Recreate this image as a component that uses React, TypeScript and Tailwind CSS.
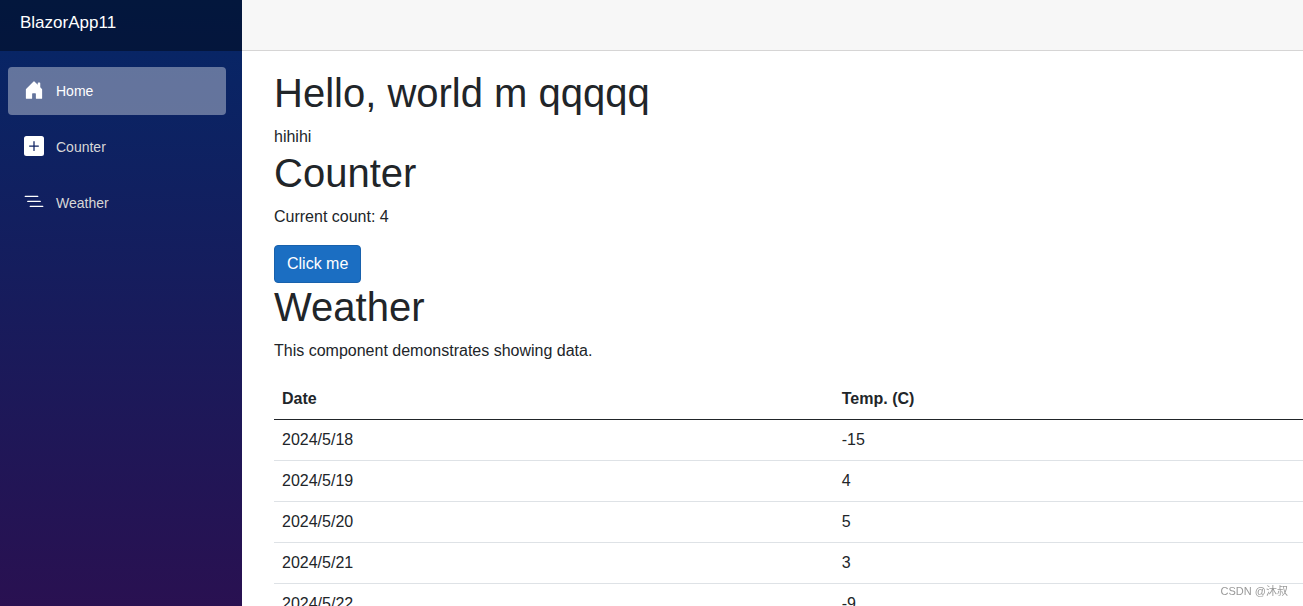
import { useState } from 'react';
import { BsListNested, BsPlusSquareFill } from 'react-icons/bs';

function HouseIcon({ className }: { className?: string }) {
  return (
    <svg viewBox="0 0 16 16" fill="currentColor" className={className} aria-hidden="true">
      <path d="M6.5 14.5v-3.505c0-.245.25-.495.5-.495h2c.25 0 .5.25.5.5v3.5a.5.5 0 0 0 .5.5h4a.5.5 0 0 0 .5-.5v-7a.5.5 0 0 0-.146-.354L13 5.793V2.5a.5.5 0 0 0-.5-.5h-1a.5.5 0 0 0-.5.5v1.293L8.354 1.146a.5.5 0 0 0-.708 0l-6 6A.5.5 0 0 0 1.5 7.5v7a.5.5 0 0 0 .5.5h4a.5.5 0 0 0 .5-.5Z" />
    </svg>
  );
}

const navItems = [
  { label: 'Home', href: '#home', icon: HouseIcon, active: true },
  { label: 'Counter', href: '#counter', icon: BsPlusSquareFill, active: false },
  { label: 'Weather', href: '#weather', icon: BsListNested, active: false },
];

const forecasts = [
  { date: '2024/5/18', temp: -15 },
  { date: '2024/5/19', temp: 4 },
  { date: '2024/5/20', temp: 5 },
  { date: '2024/5/21', temp: 3 },
  { date: '2024/5/22', temp: -9 },
];

function Sidebar() {
  return (
    <aside className="w-[242px] shrink-0 bg-[linear-gradient(180deg,rgb(5,39,103)_0px,#3a0647_890px)]">
      <div className="h-[51px] bg-black/40 px-5 pt-[9px]">
        <a href="#home" className="text-[17px] leading-7 text-white">
          BlazorApp11
        </a>
      </div>
      <nav className="flex flex-col gap-2 pt-4 pr-4 pl-2">
        {navItems.map(({ label, href, icon: Icon, active }) => (
          <a
            key={label}
            href={href}
            className={
              active
                ? 'flex h-12 items-center gap-3 rounded bg-white/37 px-4 text-sm text-white'
                : 'flex h-12 items-center gap-3 rounded px-4 text-sm text-[#d7d7d7] hover:bg-white/10'
            }
          >
            <Icon className="mb-0.5 size-5 text-white" />
            {label}
          </a>
        ))}
      </nav>
    </aside>
  );
}

function Counter() {
  const [count, setCount] = useState(4);

  return (
    <section id="counter">
      <h1 className="mb-2 text-[40px] leading-12">Counter</h1>
      <p className="mb-4">Current count: {count}</p>
      <button
        onClick={() => setCount(count + 1)}
        className="block h-[38px] rounded border border-[#1861ac] bg-[#1b6ec2] px-3 text-white"
      >
        Click me
      </button>
    </section>
  );
}

function Weather() {
  return (
    <section id="weather">
      <h1 className="mb-2 text-[40px] leading-12">Weather</h1>
      <p className="mb-4">This component demonstrates showing data.</p>
      <table className="w-full table-fixed text-left">
        <thead>
          <tr className="border-b border-[#212529]">
            <th className="w-[54.4%] p-2">Date</th>
            <th className="p-2">Temp. (C)</th>
          </tr>
        </thead>
        <tbody>
          {forecasts.map((f) => (
            <tr key={f.date} className="border-b border-[#dee2e6]">
              <td className="p-2">{f.date}</td>
              <td className="p-2">{f.temp}</td>
            </tr>
          ))}
        </tbody>
      </table>
    </section>
  );
}

export default function App() {
  return (
    <div className="flex h-screen overflow-hidden bg-white font-['Liberation_Sans',Arial,sans-serif] text-base text-[#212529]">
      <Sidebar />
      <main className="min-w-0 flex-1">
        <div className="h-[51px] border-b border-[#d6d5d5] bg-[#f7f7f7]" />
        <article className="pt-[18px] pl-8">
          <h1 className="mb-2 text-[40px] leading-12">Hello, world m qqqqq</h1>
          <div>hihihi</div>
          <Counter />
          <Weather />
        </article>
      </main>
      <span className="fixed right-[15px] bottom-[7px] font-['Liberation_Sans','Noto_Sans_CJK_SC',sans-serif] text-[11px] leading-4 text-[#999999]">
        CSDN @沐叔
      </span>
    </div>
  );
}
